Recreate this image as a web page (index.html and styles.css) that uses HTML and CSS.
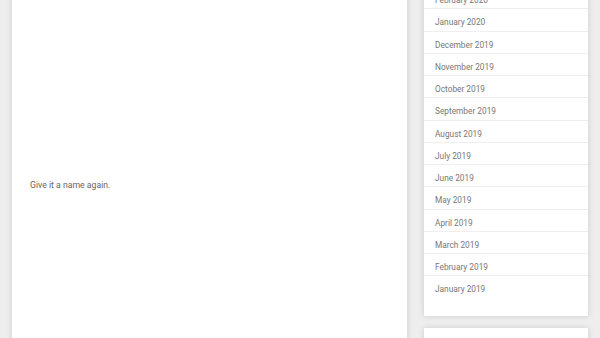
FILE: index.html
```html
<!DOCTYPE html>
<html lang="en">
<head>
    <meta charset="UTF-8">
    <meta name="viewport" content="width=device-width, initial-scale=1.0">
    <title>Archives</title>
    <link rel="stylesheet" href="styles.css">
</head>
<body>
    <div class="page">
        <main class="post">
            <p>Give it a name again.</p>
        </main>

        <aside class="sidebar">
            <section class="widget">
                <ul class="archive">
                    <li><a href="#">February 2020</a></li>
                    <li><a href="#">January 2020</a></li>
                    <li><a href="#">December 2019</a></li>
                    <li><a href="#">November 2019</a></li>
                    <li><a href="#">October 2019</a></li>
                    <li><a href="#">September 2019</a></li>
                    <li><a href="#">August 2019</a></li>
                    <li><a href="#">July 2019</a></li>
                    <li><a href="#">June 2019</a></li>
                    <li><a href="#">May 2019</a></li>
                    <li><a href="#">April 2019</a></li>
                    <li><a href="#">March 2019</a></li>
                    <li><a href="#">February 2019</a></li>
                    <li><a href="#">January 2019</a></li>
                </ul>
            </section>
            <section class="widget next"></section>
        </aside>
    </div>
</body>
</html>
```

FILE: styles.css
```css
body {
    font-family: Roboto, "Noto Sans", sans-serif;
    background-color: #eeeeee;
    margin: 0;
    padding: 0;
    overflow: hidden;
}

.page {
    display: flex;
    gap: 17px;
    padding: 0 12px;
    margin-top: -13px;
}

.post {
    width: 395px;
    height: 400px;
    background-color: #fff;
    box-shadow: 0 0 6px rgba(0, 0, 0, 0.15);
    padding: 193px 18px 0;
    box-sizing: border-box;
}

.post p {
    margin: 0;
    font-size: 8.7px;
    color: #666;
}

.sidebar {
    width: 164px;
}

.widget {
    background-color: #fff;
    box-shadow: 0 0 6px rgba(0, 0, 0, 0.15);
}

.archive {
    list-style: none;
    margin: 0;
    padding: 0 0 17px;
}

.archive li {
    height: 22.25px;
    line-height: 22px;
    padding-left: 11px;
    border-bottom: 1px solid #efefef;
    box-sizing: border-box;
}

.archive li:last-child {
    border-bottom: none;
}

.archive a {
    color: #777;
    font-size: 8.3px;
    text-decoration: none;
}

.next {
    margin-top: 12px;
    height: 40px;
}
```
